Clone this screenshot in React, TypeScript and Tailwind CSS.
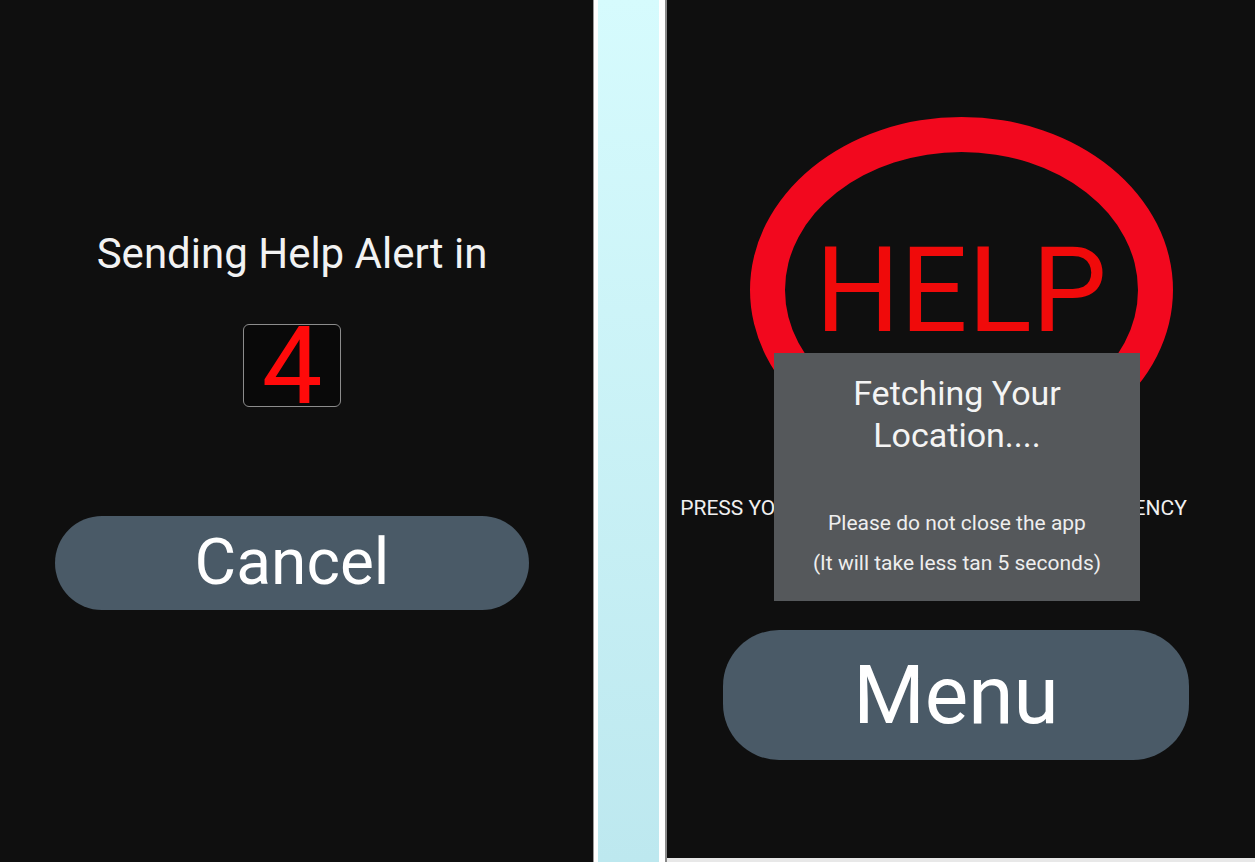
export default function App() {
  return (
    <div
      className="flex h-[862px] w-[1255px] overflow-hidden bg-white"
      style={{ fontFamily: "Roboto, 'Liberation Sans', sans-serif" }}
    >
      {/* Countdown screen */}
      <div className="flex h-[862px] w-[593px] flex-col items-center bg-[#0f0f0f] pr-[9px] pt-[232px]">
        <div className="h-[44px] whitespace-nowrap text-[42px] leading-[44px] text-[#f2f2f2]">
          Sending Help Alert in
        </div>
        <div className="mt-[48px] flex h-[83px] w-[98px] items-center justify-center rounded-[6px] border-[1.5px] border-[#8c8c8c] bg-[#090909]">
          <span className="text-[108px] leading-none text-[#ff0a0a]">4</span>
        </div>
        <button className="mt-[109px] flex h-[94px] w-[474px] items-center justify-center rounded-full bg-[#4a5a67] text-[64px] leading-none text-white">
          Cancel
        </button>
      </div>

      {/* Divider strip */}
      <div className="w-px bg-[#9a9a9a]" />
      <div className="w-[4px] bg-white" />
      <div className="w-[61px] bg-gradient-to-b from-[#d6fbfd] to-[#bde8ef]" />
      <div className="w-[6px] bg-white" />
      <div className="w-[2px] bg-[#8a8a8a]" />

      {/* Help screen */}
      <div className="flex flex-1 flex-col">
        <div className="relative flex h-[858px] flex-col items-center bg-[#0f0f0f] pt-[117px]">
          <div className="flex h-[346px] w-[423px] items-center justify-center rounded-[50%] border-[35px] border-[#f2081e]">
            <span className="text-[119px] leading-none text-[#f00a0a]">HELP</span>
          </div>
          <div className="mr-[55px] mt-[33px] h-[24px] whitespace-nowrap text-[21px] leading-[24px] text-[#f0f0f0]">
            PRESS YOUR HELP BUTTON IN CASE OF EMERGENCY
          </div>
          <button className="mt-[110px] flex h-[130px] w-[466px] -translate-x-[5px] items-center justify-center rounded-[56px] bg-[#4a5a67] text-[82px] leading-none text-white">
            Menu
          </button>

          {/* Location dialog */}
          <div className="absolute left-[107px] top-[353px] flex h-[248px] w-[366px] flex-col items-center bg-[#55585b] pt-[20px] text-center">
            <div className="whitespace-nowrap text-[34px] leading-[41.5px] text-[#f4f4f4]">
              Fetching Your
              <br />
              Location....
            </div>
            <div className="mt-[47px] whitespace-nowrap text-[21px] leading-[40px] text-[#eeeeee]">
              <div>Please do not close the app</div>
              <div>(It will take less tan 5 seconds)</div>
            </div>
          </div>
        </div>
        <div className="flex-1 bg-[#e8e8e8]" />
      </div>
    </div>
  );
}
